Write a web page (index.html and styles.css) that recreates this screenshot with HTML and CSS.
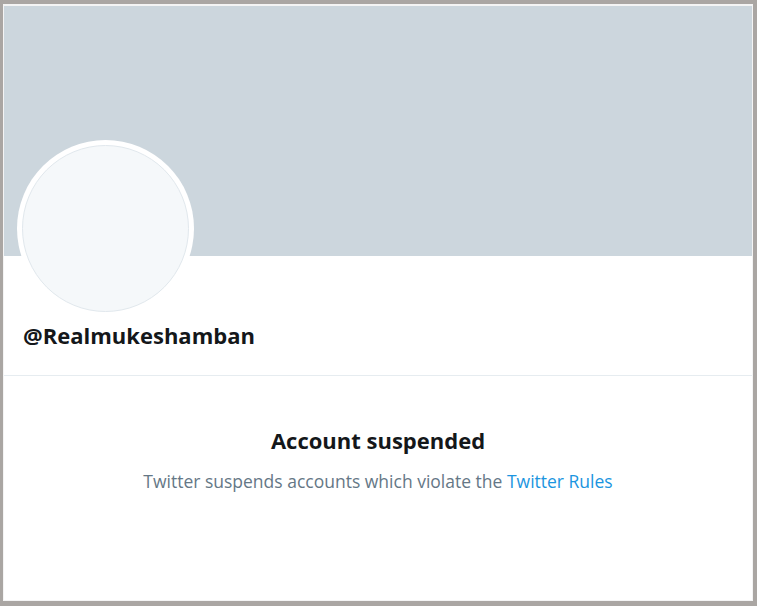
FILE: index.html
```html
<!DOCTYPE html>
<html lang="en">
<head>
<meta charset="utf-8">
<title>@Realmukeshamban</title>
<link rel="stylesheet" href="styles.css">
</head>
<body>
<div class="frame">
  <div class="banner"></div>
  <div class="profile">
    <div class="avatar-ring"><div class="avatar"></div></div>
    <div class="handle">@Realmukeshamban</div>
  </div>
  <div class="suspended">
    <h1 class="title">Account suspended</h1>
    <p class="message">Twitter suspends accounts which violate the <a class="link" href="#">Twitter Rules</a></p>
  </div>
</div>
</body>
</html>
```
FILE: styles.css
```css
html, body {
  margin: 0;
  padding: 0;
}
body {
  background: #aaa6a3;
  height: 606px;
  overflow: hidden;
  font-family: "Open Sans", "Noto Sans", "Liberation Sans", sans-serif;
}
.frame {
  margin: 4px 4px 5px 3px;
  border: 1px solid #f4f4f4;
  border-top-width: 2px;
  height: 594px;
  background: #fff;
  box-sizing: content-box;
}
.banner {
  height: 250px;
  background: #ccd6dd;
}
.profile {
  display: flow-root;
  padding: 0 16px 0 13px;
  border-bottom: 1px solid #e6ecf0;
  height: 119px;
}
.avatar-ring {
  width: 177px;
  height: 177px;
  margin-top: -116px;
  border-radius: 50%;
  background: #fff;
  padding: 5px;
  box-sizing: border-box;
}
.avatar {
  width: 100%;
  height: 100%;
  border-radius: 50%;
  background: #f5f8fa;
  border: 1px solid #e1e8ed;
  box-sizing: border-box;
}
.handle {
  margin: 4px 0 0 6px;
  font-size: 22px;
  font-weight: 700;
  line-height: 28px;
  color: #14171a;
}
.suspended {
  text-align: center;
  padding-top: 50px;
}
.title {
  margin: 0;
  font-size: 22px;
  font-weight: 700;
  line-height: 28px;
  color: #14171a;
}
.message {
  margin: 16px 0 0;
  font-size: 17.5px;
  line-height: 22px;
  color: #657786;
}
.link {
  color: #1b95e0;
  text-decoration: none;
}
```
